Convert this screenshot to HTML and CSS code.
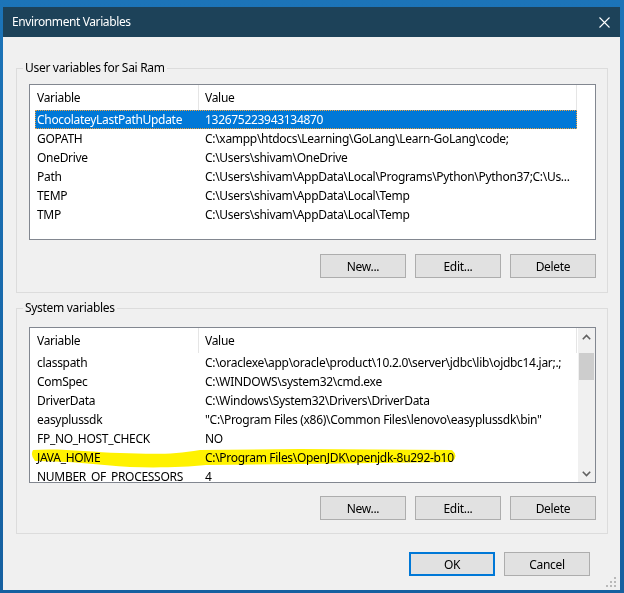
FILE: index.html
```html
<!DOCTYPE html>
<html lang="en">
<head>
<meta charset="utf-8">
<title>Environment Variables</title>
<link rel="stylesheet" href="styles.css">
</head>
<body>
<div class="desktop">
  <div class="window">
    <div class="titlebar">
      <span class="title">Environment Variables</span>
      <svg class="close" width="11" height="11" viewBox="0 0 11 11"><path d="M0.5 0.5 L10.5 10.5 M10.5 0.5 L0.5 10.5" stroke="#ffffff" stroke-width="1.1" fill="none"/></svg>
    </div>
    <div class="content">
      <section class="group group-user">
        <div class="group-title">User variables for Sai Ram</div>
        <div class="listbox">
          <div class="list-main">
            <div class="list-header">
              <div class="hcol hcol-var">Variable</div>
              <div class="hcol hcol-val">Value</div>
            </div>
            <div class="row selected"><div class="cell-var">ChocolateyLastPathUpdate</div><div class="cell-val">132675223943134870</div></div>
            <div class="row"><div class="cell-var">GOPATH</div><div class="cell-val">C:\xampp\htdocs\Learning\GoLang\Learn-GoLang\code;</div></div>
            <div class="row"><div class="cell-var">OneDrive</div><div class="cell-val">C:\Users\shivam\OneDrive</div></div>
            <div class="row"><div class="cell-var">Path</div><div class="cell-val">C:\Users\shivam\AppData\Local\Programs\Python\Python37;C:\Us...</div></div>
            <div class="row"><div class="cell-var">TEMP</div><div class="cell-val">C:\Users\shivam\AppData\Local\Temp</div></div>
            <div class="row"><div class="cell-var">TMP</div><div class="cell-val">C:\Users\shivam\AppData\Local\Temp</div></div>
          </div>
        </div>
        <div class="button-row">
          <button class="btn">New...</button>
          <button class="btn">Edit...</button>
          <button class="btn">Delete</button>
        </div>
      </section>

      <section class="group group-sys">
        <div class="group-title">System variables</div>
        <div class="listbox">
          <div class="list-main">
            <div class="list-header">
              <div class="hcol hcol-var">Variable</div>
              <div class="hcol hcol-val">Value</div>
            </div>
            <div class="row"><div class="cell-var">classpath</div><div class="cell-val">C:\oraclexe\app\oracle\product\10.2.0\server\jdbc\lib\ojdbc14.jar;.;</div></div>
            <div class="row"><div class="cell-var">ComSpec</div><div class="cell-val">C:\WINDOWS\system32\cmd.exe</div></div>
            <div class="row"><div class="cell-var">DriverData</div><div class="cell-val">C:\Windows\System32\Drivers\DriverData</div></div>
            <div class="row"><div class="cell-var">easyplussdk</div><div class="cell-val">"C:\Program Files (x86)\Common Files\lenovo\easyplussdk\bin"</div></div>
            <div class="row"><div class="cell-var">FP_NO_HOST_CHECK</div><div class="cell-val">NO</div></div>
            <div class="row"><div class="cell-var">JAVA_HOME</div><div class="cell-val">C:\Program Files\OpenJDK\openjdk-8u292-b10</div></div>
            <div class="row"><div class="cell-var">NUMBER_OF_PROCESSORS</div><div class="cell-val">4</div></div>
          </div>
          <div class="scrollbar">
            <div class="sb-btn"><svg width="9" height="6" viewBox="0 0 9 6"><path d="M0.8 5.2 L4.5 1.5 L8.2 5.2" stroke="#606060" stroke-width="1.6" fill="none"/></svg></div>
            <div class="sb-track"><div class="sb-thumb"></div></div>
            <div class="sb-btn"><svg width="9" height="6" viewBox="0 0 9 6"><path d="M0.8 0.8 L4.5 4.5 L8.2 0.8" stroke="#606060" stroke-width="1.6" fill="none"/></svg></div>
          </div>
          <svg class="marker" width="567" height="156" viewBox="29 327 567 156">
            <path d="M33 450 C60 448 90 452 120 453 C150 454 172 455 200 450 L300 449 L452 450 Q459 456 452 462 L300 464 L206 465 C186 467 160 468 130 467 C100 465 70 461 35 461 Q30 455 33 450 Z" fill="#fff200"/>
          </svg>
        </div>
        <div class="button-row">
          <button class="btn">New...</button>
          <button class="btn">Edit...</button>
          <button class="btn">Delete</button>
        </div>
      </section>

      <div class="dialog-buttons">
        <button class="btn btn-default">OK</button>
        <button class="btn">Cancel</button>
      </div>
    </div>
    <svg class="grip" width="11" height="11" viewBox="0 0 11 11">
      <rect x="8" y="0" width="2" height="2" fill="#b9b9b9"/>
      <rect x="4" y="4" width="2" height="2" fill="#b9b9b9"/>
      <rect x="8" y="4" width="2" height="2" fill="#b9b9b9"/>
      <rect x="0" y="8" width="2" height="2" fill="#b9b9b9"/>
      <rect x="4" y="8" width="2" height="2" fill="#b9b9b9"/>
      <rect x="8" y="8" width="2" height="2" fill="#b9b9b9"/>
    </svg>
  </div>
</div>
</body>
</html>
```

FILE: styles.css
```css
html, body {
  margin: 0;
  padding: 0;
}

body {
  background: #1a6aab;
  font-family: "Noto Sans", "Segoe UI", sans-serif;
  font-size: 12px;
  letter-spacing: -0.3px;
  color: #000;
}

.desktop {
  padding: 7px 4px 3px 3px;
  background: linear-gradient(#1c74b8, #1660a0);
}

.window {
  position: relative;
  height: 583px;
  background: #f0f0f0;
  display: flex;
  flex-direction: column;
}

.titlebar {
  height: 30px;
  flex: none;
  background: #1d4259;
  color: #fff;
  display: flex;
  align-items: center;
  justify-content: space-between;
  padding: 0 10px 0 9px;
}

.title {
  line-height: 16px;
  letter-spacing: -0.4px;
}

.close {
  display: block;
}

.content {
  padding: 31px 12px 0 13px;
}

.group {
  border: 1px solid #dcdcdc;
  padding: 0 11px 14px 12px;
}

.group-title {
  width: max-content;
  height: 16px;
  line-height: 16px;
  margin: -9px 0 0 -6px;
  padding: 0 2px;
  background: #f0f0f0;
}

.group-user .listbox {
  margin-top: 8px;
}

.group-sys {
  margin-top: 15px;
  padding-bottom: 13px;
}

.group-sys .listbox {
  margin-top: 11px;
}

.listbox {
  position: relative;
  height: 156px;
  box-sizing: border-box;
  border: 1px solid #828790;
  background: #fff;
  display: flex;
  overflow: hidden;
}

.list-main {
  flex: 1;
  overflow: hidden;
}

.list-header {
  display: flex;
  height: 25px;
}

.hcol {
  box-sizing: border-box;
  padding: 5px 0 0 7px;
  line-height: 16px;
  border-right: 1px solid #e5e5e5;
}

.hcol-var {
  width: 169px;
}

.hcol-val {
  width: 378px;
  padding-left: 6px;
}

.row {
  display: flex;
  width: 542px;
  height: 19px;
  line-height: 19px;
  margin-left: 5px;
  box-sizing: border-box;
  white-space: nowrap;
}

.cell-var {
  width: 163px;
  flex: none;
  box-sizing: border-box;
  padding-left: 2px;
  overflow: hidden;
}

.cell-val {
  flex: 1;
  padding-left: 7px;
  overflow: hidden;
}

.row.selected {
  background: #0078d7;
  color: #fff;
  outline: 1px dotted #f0a13c;
  outline-offset: -1px;
}

.scrollbar {
  width: 17px;
  flex: none;
  background: #f0f0f0;
  display: flex;
  flex-direction: column;
}

.sb-btn {
  height: 17px;
  display: flex;
  align-items: center;
  justify-content: center;
}

.sb-btn svg {
  display: block;
}

.sb-track {
  flex: 1;
}

.sb-thumb {
  margin: 8px 1px 0 1px;
  height: 27px;
  background: #cdcdcd;
}

.marker {
  position: absolute;
  left: -1px;
  top: -1px;
  mix-blend-mode: multiply;
  pointer-events: none;
}

.button-row {
  display: flex;
  justify-content: flex-end;
  gap: 9px;
  margin-top: 14px;
}

.group-sys .button-row {
  margin-top: 13px;
}

.btn {
  width: 86px;
  height: 24px;
  box-sizing: border-box;
  border: 1px solid #adadad;
  background: #e1e1e1;
  color: #000;
  font: inherit;
  letter-spacing: inherit;
  padding: 0;
  margin: 0;
  border-radius: 0;
}

.btn-default {
  border: 2px solid #0078d7;
}

.dialog-buttons {
  display: flex;
  justify-content: flex-end;
  gap: 9px;
  margin-top: 18px;
  padding-right: 18px;
}

.grip {
  position: absolute;
  right: 3px;
  bottom: 2px;
}
```
